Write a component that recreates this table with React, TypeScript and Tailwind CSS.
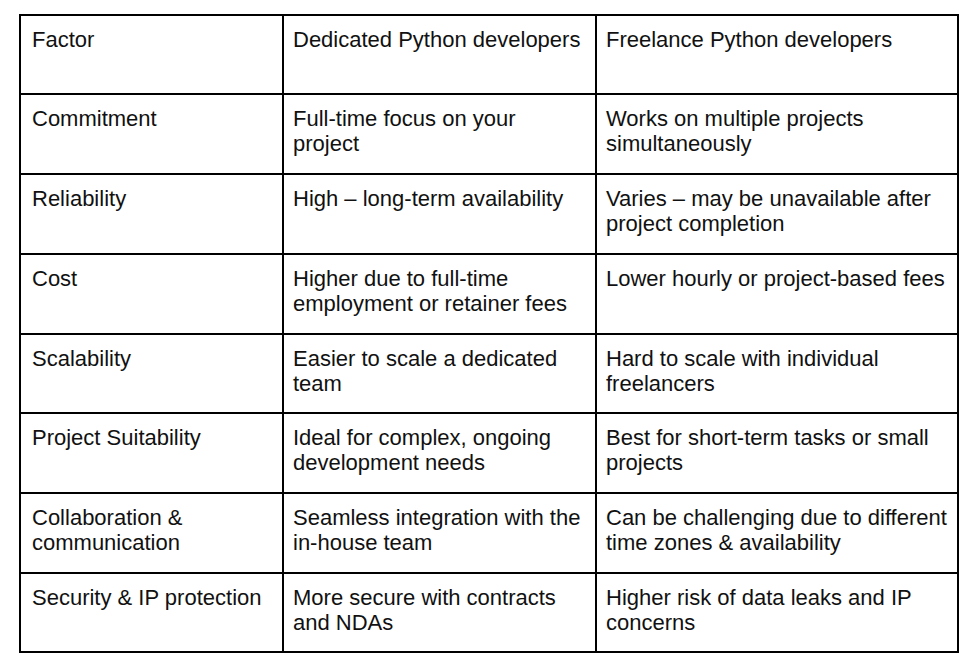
const rows = [
  {
    factor: "Factor",
    dedicated: "Dedicated Python developers",
    freelance: "Freelance Python developers",
    h: "h-[79px]",
  },
  {
    factor: "Commitment",
    dedicated: "Full-time focus on your project",
    freelance: "Works on multiple projects simultaneously",
    h: "h-[80px]",
  },
  {
    factor: "Reliability",
    dedicated: "High – long-term availability",
    freelance: "Varies – may be unavailable after project completion",
    h: "h-[80px]",
  },
  {
    factor: "Cost",
    dedicated: "Higher due to full-time employment or retainer fees",
    freelance: "Lower hourly or project-based fees",
    h: "h-[80px]",
  },
  {
    factor: "Scalability",
    dedicated: "Easier to scale a dedicated team",
    freelance: "Hard to scale with individual freelancers",
    h: "h-[79px]",
  },
  {
    factor: "Project Suitability",
    dedicated: "Ideal for complex, ongoing development needs",
    freelance: "Best for short-term tasks or small projects",
    h: "h-[80px]",
  },
  {
    factor: "Collaboration & communication",
    dedicated: "Seamless integration with the in-house team",
    freelance: "Can be challenging due to different time zones & availability",
    h: "h-[80px]",
  },
  {
    factor: "Security & IP protection",
    dedicated: "More secure with contracts and NDAs",
    freelance: "Higher risk of data leaks and IP concerns",
    h: "h-[77px]",
  },
];

export default function App() {
  return (
    <div className="w-[976px] h-[665px] bg-white pt-[14px] pl-[19px]">
      <div
        className="w-[940px] border-2 border-black text-[#111] text-[22px] leading-[25px]"
        style={{ fontFamily: '"Liberation Sans", Arial, sans-serif' }}
      >
        {rows.map((row, i) => (
          <div
            key={row.factor}
            className={`grid grid-cols-[263px_313px_1fr] ${row.h} ${
              i < rows.length - 1 ? "border-b-2 border-black" : ""
            }`}
          >
            <div className="border-r-2 border-black pl-[11px] pr-2 pt-[11px]">
              {row.factor}
            </div>
            <div className="border-r-2 border-black pl-[9px] pr-[10px] pt-[11px]">
              {row.dedicated}
            </div>
            <div className="pl-[9px] pr-2 pt-[11px]">{row.freelance}</div>
          </div>
        ))}
      </div>
    </div>
  );
}
